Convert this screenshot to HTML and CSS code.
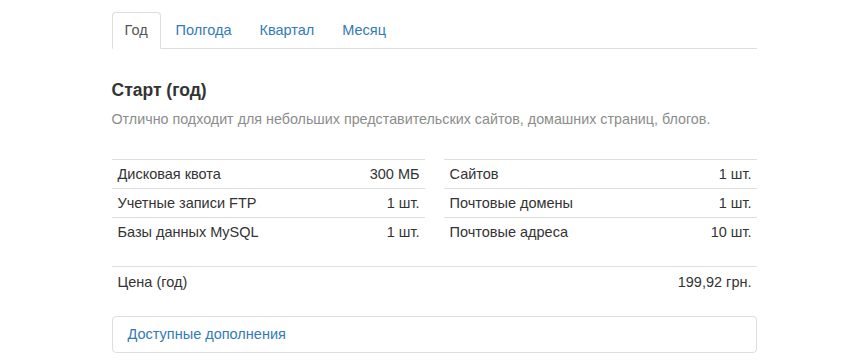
FILE: index.html
```html
<!DOCTYPE html>
<html lang="ru">
<head>
<meta charset="utf-8">
<link rel="stylesheet" href="styles.css">
</head>
<body>
<div class="container">
  <ul class="tabs">
    <li class="tab active"><a>Год</a></li>
    <li class="tab"><a>Полгода</a></li>
    <li class="tab"><a>Квартал</a></li>
    <li class="tab"><a>Месяц</a></li>
  </ul>
  <h3 class="title">Старт (год)</h3>
  <p class="desc">Отлично подходит для небольших представительских сайтов, домашних страниц, блогов.</p>
  <div class="specs">
    <table class="spec">
      <tr><td>Дисковая квота</td><td class="val">300 МБ</td></tr>
      <tr><td>Учетные записи FTP</td><td class="val">1 шт.</td></tr>
      <tr><td>Базы данных MySQL</td><td class="val">1 шт.</td></tr>
    </table>
    <table class="spec">
      <tr><td>Сайтов</td><td class="val">1 шт.</td></tr>
      <tr><td>Почтовые домены</td><td class="val">1 шт.</td></tr>
      <tr><td>Почтовые адреса</td><td class="val">10 шт.</td></tr>
    </table>
  </div>
  <table class="spec price">
    <tr><td>Цена (год)</td><td class="val">199,92 грн.</td></tr>
  </table>
  <div class="panel"><a>Доступные дополнения</a></div>
</div>
</body>
</html>
```
FILE: styles.css
```css
html, body {
  margin: 0;
  padding: 0;
  background: #fff;
}
body {
  font-family: "Liberation Sans", Arial, sans-serif;
  font-size: 14.5px;
  line-height: 20px;
  color: #333;
}
.container {
  width: 645px;
  margin: 0 auto;
  padding-top: 12px;
}
.tabs {
  list-style: none;
  margin: 0;
  padding: 0;
  display: flex;
  border-bottom: 1px solid #ddd;
}
.tab {
  margin-right: 2px;
  margin-bottom: -1px;
}
.tab a {
  display: block;
  padding: 7px 12px 8px;
  border: 1px solid transparent;
  border-radius: 4px 4px 0 0;
  color: #337ab7;
}
.tab.active a {
  color: #555;
  background: #fff;
  border-color: #ddd #ddd transparent #ddd;
}
.title {
  margin: 29px 0 0;
  font-size: 17.5px;
  line-height: 24px;
  font-weight: bold;
  color: #333;
}
.desc {
  margin: 7px 0 0;
  font-size: 14.3px;
  color: #8c8c8c;
}
.specs {
  display: grid;
  grid-template-columns: 1fr 1fr;
  column-gap: 19px;
  margin-top: 30px;
}
.spec {
  width: 100%;
  border-collapse: collapse;
}
.spec td {
  border-top: 1px solid #ddd;
  padding: 4px 5px 4px 6px;
  line-height: 20px;
}
.spec .val {
  text-align: right;
}
.price {
  margin-top: 20px;
}
.price td {
  padding-top: 5px;
  padding-bottom: 5px;
}
.panel {
  margin-top: 19px;
  border: 1px solid #ddd;
  border-radius: 4px;
  padding: 7px 15px 8px;
}
.panel a {
  color: #337ab7;
}
```
